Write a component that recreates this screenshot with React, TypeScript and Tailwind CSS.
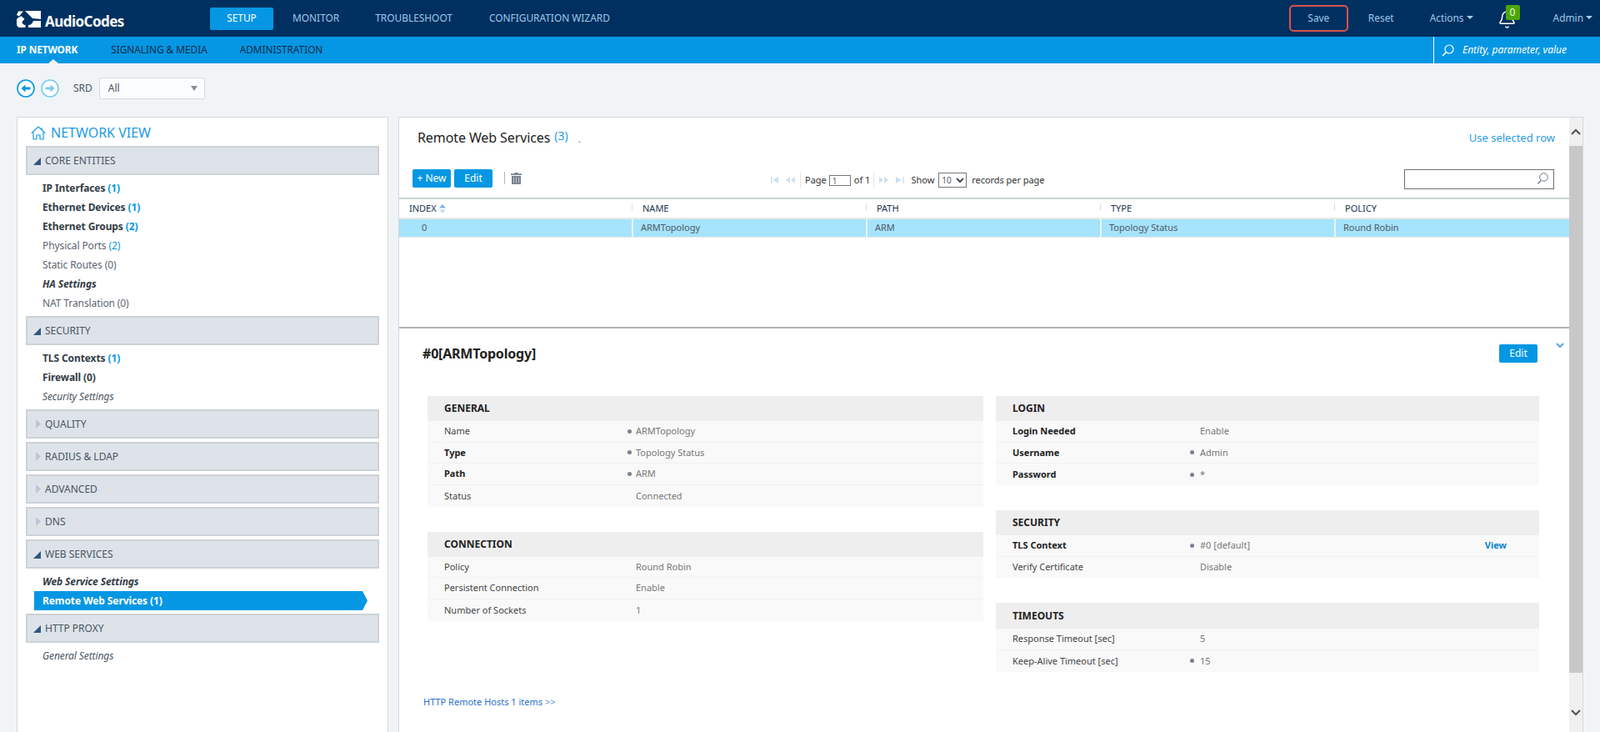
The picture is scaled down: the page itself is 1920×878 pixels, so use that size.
import React from "react";
import { Bell } from "lucide-react";

const Logo = () => (
  <div className="flex items-center w-[232px]">
    <svg width="29" height="20" viewBox="0 0 29 20" className="shrink-0 mt-[2px]">
      <path d="M2 0.5h6L3 6.5 0 5z" fill="#fff" />
      <path d="M10 0h19v10l-10-1z" fill="#fff" />
      <path d="M0 10c2-2 4-3.5 6-3.5l3.5 3.5-3 3c0 2.500 2 4 4 4v3H4C1.500 20 0 18 0 16z" fill="#fff" />
      <path d="M20 12h9v8H14v-3c3 0 5-2 6-5z" fill="#fff" />
    </svg>
    <span className="ml-[5px] mt-[6px] text-[17px] font-bold text-white leading-none tracking-[-0.55px] font-['Liberation_Serif',serif]">AudioCodes</span>
  </div>
);

const Caret = () => <span className="inline-block ml-[3px] mb-[2px] border-x-[4px] border-t-[4px] border-x-transparent border-t-[#a9cfee]" />;

const TopBar = () => (
  <div className="flex items-center h-11 bg-[#003060] pl-5 text-[11.9px] text-[#9ec8ea] shrink-0">
    <Logo />
    <div className="flex items-center h-[27px] w-[76px] justify-center bg-[#0597e3] text-white rounded-[2px]">SETUP</div>
    <span className="ml-[23px]">MONITOR</span>
    <span className="ml-[43px]">TROUBLESHOOT</span>
    <span className="ml-[44px]">CONFIGURATION WIZARD</span>
    <div className="ml-auto flex items-center mr-[9px]">
      <div className="flex items-center justify-center w-[71px] h-8 border-2 border-[#d9534f] rounded-[5px]">Save</div>
      <span className="ml-[24px]">Reset</span>
      <span className="ml-[43px] flex items-center">Actions<Caret /></span>
      <div className="relative ml-[29px] w-[23px] h-[24px] flex items-center justify-center">
        <Bell size={23} strokeWidth={1.5} className="text-white mt-[2px]" />
        <span className="absolute left-[10px] top-[-4px] w-[17px] h-[18px] bg-[#4ca60a] text-[#e8ffd8] rounded-[2px] flex items-center justify-center text-xs">0</span>
      </div>
      <span className="ml-[44px] flex items-center">Admin<Caret /></span>
    </div>
  </div>
);

const SubBar = () => (
  <div className="relative flex items-center h-8 bg-[#0597e3] pl-5 text-[11.8px] shrink-0">
    <span className="font-bold text-white tracking-[-0.1px]">IP NETWORK</span>
    <span className="ml-[40px] text-[#0e2a47]">SIGNALING &amp; MEDIA</span>
    <span className="ml-[39px] text-[#0e2a47]">ADMINISTRATION</span>
    <span className="absolute left-[58px] bottom-0 border-x-[6px] border-b-[5px] border-x-transparent border-b-[#f0f4f7]" />
    <div className="ml-auto flex items-center h-full w-[200px] border-l border-white pl-[9px]">
      <svg width="15" height="15" viewBox="0 0 15 15" fill="none" stroke="#fff" strokeWidth="1.2">
        <circle cx="9" cy="6" r="5" />
        <path d="M5.3 9.7L1 14" strokeWidth="1.5" />
      </svg>
      <span className="ml-[10px] italic text-white text-xs">Entity, parameter, value</span>
    </div>
  </div>
);

const NavCircle = ({ dir, active }: { dir: "l" | "r"; active: boolean }) => {
  const c = active ? "#0597e3" : "#7ccaf3";
  return (
    <svg width="22" height="22" viewBox="0 0 22 22">
      <circle cx="11" cy="11" r="10" fill="#fff" stroke={c} strokeWidth="1.6" />
      <path d={dir === "l" ? "M5.500 11l5-4.500v3h6v3h-6v3z" : "M16.500 11l-5-4.500v3h-6v3h6v3z"} fill={c} />
    </svg>
  );
};

const SrdRow = () => (
  <div className="flex items-center h-[64px] pl-5 pb-[4px] shrink-0 text-xs text-[#4a5560]">
    <NavCircle dir="l" active />
    <div className="ml-[7px]"><NavCircle dir="r" active={false} /></div>
    <span className="ml-[17px]">SRD</span>
    <div className="ml-[8px] flex items-center justify-between w-[127px] h-[26px] bg-[#fbfcfd] border border-[#d5d8db] rounded-[2px] pl-[10px] pr-[8px]">
      <span>All</span>
      <span className="border-x-[4.5px] border-t-[6px] border-x-transparent border-t-[#8a8f95]" />
    </div>
  </div>
);

const SectionHead = ({ label, open }: { label: string; open: boolean }) => (
  <div className="flex items-center h-[35px] bg-[#dde3e9] border-2 border-[#ccd2d6] text-xs text-[#4a5560] relative pl-[21px]">
    {open ? (
      <svg width="9" height="9" viewBox="0 0 9 9" className="absolute left-[7px] top-[12px]"><path d="M9 0v9H0z" fill="#33567f" /></svg>
    ) : (
      <svg width="6" height="11" viewBox="0 0 6 11" className="absolute left-[10px] top-[10px]"><path d="M0 0l6 5.500L0 11z" fill="#bdc6d6" /></svg>
    )}
    {label}
  </div>
);

type It = { t: string; n?: string; k?: "b" | "i" | "bi"; active?: boolean };

const Item = ({ t, n, k }: It) => {
  const base = k === "b" ? "font-bold text-[#333c46]" : k === "i" ? "italic text-[#4a5560]" : k === "bi" ? "italic font-bold text-[#333c46]" : "text-[#5b6570]";
  return (
    <div className={"h-[23px] flex items-center pl-[10px] text-xs tracking-[-0.1px] " + base}>
      <span className="whitespace-pre">{t}</span>
      {n && <span className={"ml-[3px] " + (n === "(0)" ? "" : "text-[#0597e3]")}>{n}</span>}
    </div>
  );
};

const Group = ({ label, items, children }: { label: string; items?: It[]; children?: React.ReactNode }) => (
  <div>
    <SectionHead label={label} open={!!items} />
    {items && <div className="py-1 pl-[10px]">{items.map((i) => <Item key={i.t} {...i} />)}{children}</div>}
    {!items && <div className="h-1" />}
  </div>
);

const LeftPanel = () => (
  <div className="w-[446px] shrink-0 bg-white border-x border-t border-[#d5d8db] px-[10px] overflow-hidden">
    <div className="flex items-center h-[34px] pl-[6px] pt-[2px] text-[#1c9be2]">
      <svg width="18" height="17" viewBox="0 0 18 17" fill="none" stroke="#1c9be2" strokeWidth="1.2">
        <path d="M0.800 8.800L9 1l8.200 7.800" />
        <path d="M3 7.500V16h4v-5h4v5h4V7.500" />
        <path d="M13 2v3" />
      </svg>
      <span className="ml-[6px] text-base">NETWORK VIEW</span>
    </div>
    <Group label="CORE ENTITIES" items={[
      { t: "IP Interfaces", n: "(1)", k: "b" },
      { t: "Ethernet Devices", n: "(1)", k: "b" },
      { t: "Ethernet Groups", n: "(2)", k: "b" },
      { t: "Physical Ports", n: "(2)" },
      { t: "Static Routes", n: "(0)" },
      { t: "HA Settings", k: "bi" },
      { t: "NAT Translation", n: "(0)" },
    ]} />
    <Group label="SECURITY" items={[
      { t: "TLS Contexts", n: "(1)", k: "b" },
      { t: "Firewall", n: "(0)", k: "b" },
      { t: "Security Settings", k: "i" },
    ]} />
    <Group label="QUALITY" />
    <Group label="RADIUS & LDAP" />
    <Group label="ADVANCED" />
    <Group label="DNS" />
    <Group label="WEB SERVICES" items={[{ t: "Web Service Settings", k: "bi" }]}>
      <div className="flex h-[23px] w-[400px]">
        <div className="flex items-center flex-1 bg-[#0597e3] pl-[10px] text-xs font-bold text-white tracking-[-0.1px]">Remote Web Services (1)</div>
        <svg width="6" height="23" viewBox="0 0 6 23" className="shrink-0"><path d="M0 0l6 11.500L0 23z" fill="#0597e3" /></svg>
      </div>
    </Group>
    <Group label="HTTP PROXY" items={[{ t: "General Settings", k: "i" }]} />
  </div>
);

const PagerIcon = ({ d }: { d: string }) => (
  <svg width="11" height="8" viewBox="0 0 11 8"><path d={d} fill="#cfe0ec" /></svg>
);

const Toolbar = () => (
  <div className="flex items-start h-[34px] text-[11px] text-[#333]">
    <div className="ml-4 flex items-center justify-center w-[46px] h-[22px] bg-[#0597e3] text-white text-xs rounded-[2px]">+ New</div>
    <div className="ml-1 flex items-center justify-center w-[46px] h-[22px] bg-[#0597e3] text-white text-xs rounded-[2px]">Edit</div>
    <span className="ml-[14px] mt-[3px] w-px h-[15px] bg-[#b5b5b5]" />
    <svg width="13" height="14" viewBox="0 0 13 14" className="ml-[7px] mt-[4px]">
      <path d="M4.500 0h4v1.300h4.500v1.700H0V1.300h4.500z M1 4h11v10H1z" fill="#7a8290" />
      <path d="M3.500 5.500v7M6.500 5.500v7M9.500 5.500v7" stroke="#c9cdd4" strokeWidth="0.9" />
    </svg>
    <div className="ml-[298px] flex items-center mt-[4px] h-[18px]">
      <PagerIcon d="M1 0h1.500v8H1z M10 0v8L3 4z" />
      <span className="ml-2" />
      <PagerIcon d="M5 0v8L0 4z M11 0v8L6 4z" />
      <span className="ml-[6px] w-px h-[18px] bg-[#e3e3e3]" />
      <span className="ml-[5px]">Page</span>
      <span className="ml-[3px] w-[26px] h-[13px] border border-[#777] text-[10px] leading-[12px] pl-[3px] text-[#666]">1</span>
      <span className="ml-[4px]">of 1</span>
      <span className="ml-[4px] w-px h-[18px] bg-[#e3e3e3]" />
      <span className="ml-[6px]" />
      <PagerIcon d="M0 0v8L5 4z M6 0v8L11 4z" />
      <span className="ml-[9px]" />
      <PagerIcon d="M0 0v8L7 4z M8.500 0H10v8H8.500z" />
      <span className="ml-[7px]">Show</span>
      <span className="ml-[5px] flex items-center w-[34px] h-[18px] border border-[#777] pl-[3px] text-[10px] text-[#555]">
        10
        <svg width="10" height="7" viewBox="0 0 10 7" className="ml-[5px]"><path d="M1 1l4 4 4-4" fill="none" stroke="#222" strokeWidth="1.7" /></svg>
      </span>
      <span className="ml-[6px] tracking-[-0.05px]">records per page</span>
    </div>
    <div className="ml-auto mr-[18px] relative w-[180px] h-6 border border-[#6f6f6f]">
      <svg width="14" height="15" viewBox="0 0 14 15" fill="none" stroke="#6c7680" strokeWidth="1" className="absolute right-[6px] top-[3px]">
        <circle cx="8.500" cy="5.500" r="4.800" />
        <path d="M5 9.500L1.500 13.500" strokeWidth="1.3" />
      </svg>
    </div>
  </div>
);

const cols = "grid grid-cols-[279px_281px_281px_281px_1fr]";
const heads = ["INDEX", "NAME", "PATH", "TYPE", "POLICY"];
const vals = ["0", "ARMTopology", "ARM", "Topology Status", "Round Robin"];

const Table = () => (
  <div className="border-t-2 border-[#ccd2d6]">
    <div className={cols + " h-[22px] text-[11px] text-[#1b3350]"}>
      {heads.map((h, i) => (
        <div key={h} className={"flex items-center relative " + (i === 0 ? "pl-[12px]" : "pl-[13px]")}>
          {i > 0 && <span className="absolute left-0 top-[5px] h-[9px] w-px bg-[#ddd]" />}
          {h}
          {i === 0 && (
            <svg width="8" height="11" viewBox="0 0 8 11" className="ml-[3px]">
              <path d="M4 0l4 4.500H0z" fill="#7fb2dc" />
              <path d="M4 11L0 6.500h8z" fill="#c6dcee" />
            </svg>
          )}
        </div>
      ))}
    </div>
    <div className={cols + " h-[24px] border-t-2 border-b border-t-[#e8e8e8] border-b-[#e8e8e8] bg-[#a6e3fd] text-[11px] text-[#4f5a64]"}>
      {vals.map((v, i) => (
        <div key={v} className={"flex items-center " + (i === 0 ? "pl-[27px]" : "pl-[9px] border-l-2 border-[#e8f6fc]")}>{v}</div>
      ))}
    </div>
  </div>
);

type Row = { l: string; v: string; b?: boolean; dot?: boolean; view?: boolean };

const Section = ({ title, rows, mt, labelW, gap, headH }: { title: string; rows: Row[]; mt?: string; labelW: string; gap: string; headH?: string }) => (
  <div className={mt}>
    <div className={"flex items-center bg-[#eeeeee] pl-[20px] text-xs font-bold text-[#222] " + (headH ?? "h-[30px]")}>{title}</div>
    {rows.map((r, i) => (
      <div key={r.l} className={"flex items-center h-[25.67px] bg-[#f9f9f9] pl-[20px] text-[11px] " + (i < rows.length - 1 ? "border-b border-[#f1f1f1]" : "")}>
        <span className={labelW + " " + (r.b ? "font-bold text-[#222]" : "text-[#444]")}>{r.l}</span>
        <span className="w-[5px] h-[5px] flex items-center justify-center">
          {r.dot && <span className="w-[5px] h-[5px] rounded-full bg-[#7a8290]" />}
        </span>
        <span className={gap + " text-[#777]"}>{r.v}</span>
        {r.view && <span className="ml-auto mr-[39px] font-bold text-[#0a84d0]">View</span>}
      </div>
    ))}
  </div>
);

const Details = () => (
  <div className="relative">
    <div className="flex items-center h-[62px] pl-[28px]">
      <span className="text-base font-bold text-[#222] tracking-[-0.2px] mt-[-2px]">#0[ARMTopology]</span>
      <div className="ml-auto mr-[38px] mt-[-2px] flex items-center justify-center w-[46px] h-[22px] bg-[#0597e3] text-white text-xs rounded-[2px]">Edit</div>
    </div>
    <svg width="10" height="7" viewBox="0 0 10 7" className="absolute right-[6px] top-[17px]"><path d="M1 1l4 4 4-4" fill="none" stroke="#5aa5dc" strokeWidth="2" /></svg>
    <div className="mt-[19px] flex pl-[34px] pr-[35px] gap-[15px]">
      <div className="w-[667px]">
        <Section labelW="w-[220px]" gap="ml-[5px]" title="GENERAL" rows={[
          { l: "Name", v: "ARMTopology", dot: true },
          { l: "Type", v: "Topology Status", b: true, dot: true },
          { l: "Path", v: "ARM", b: true, dot: true },
          { l: "Status", v: "Connected" },
        ]} />
        <Section labelW="w-[220px]" gap="ml-[5px]" mt="mt-[30px]" title="CONNECTION" rows={[
          { l: "Policy", v: "Round Robin" },
          { l: "Persistent Connection", v: "Enable" },
          { l: "Number of Sockets", v: "1" },
        ]} />
        <div className="mt-[89px] ml-[-5px] text-[11px] text-[#2a6fc9]">HTTP Remote Hosts 1 items <span className="text-[#6b93c9]">&gt;&gt;</span></div>
      </div>
      <div className="w-[652px]">
        <Section labelW="w-[213px]" gap="ml-[7px]" title="LOGIN" rows={[
          { l: "Login Needed", v: "Enable", b: true },
          { l: "Username", v: "Admin", b: true, dot: true },
          { l: "Password", v: "*", b: true, dot: true },
        ]} />
        <Section labelW="w-[213px]" gap="ml-[7px]" mt="mt-[30px]" title="SECURITY" rows={[
          { l: "TLS Context", v: "#0 [default]", b: true, dot: true, view: true },
          { l: "Verify Certificate", v: "Disable" },
        ]} />
        <Section labelW="w-[213px]" gap="ml-[7px]" mt="mt-[30px]" headH="h-[31px]" title="TIMEOUTS" rows={[
          { l: "Response Timeout [sec]", v: "5" },
          { l: "Keep-Alive Timeout [sec]", v: "15", dot: true },
        ]} />
      </div>
    </div>
  </div>
);

const Scrollbar = () => (
  <div className="w-4 shrink-0 bg-[#f0f0f0] flex flex-col items-center">
    <div className="h-[34px] flex items-center justify-center">
      <svg width="12" height="8" viewBox="0 0 12 8"><path d="M1 7l5-5 5 5" fill="none" stroke="#555" strokeWidth="2.200" /></svg>
    </div>
    <div className="w-full h-[632px] bg-[#c8c8c8]" />
    <div className="mt-[44px]">
      <svg width="12" height="8" viewBox="0 0 12 8"><path d="M1 1l5 5 5-5" fill="none" stroke="#555" strokeWidth="2.200" /></svg>
    </div>
  </div>
);

const RightPanel = () => (
  <div className="w-[1422px] ml-[12px] shrink-0 flex bg-white border-x border-t border-[#d5d8db] overflow-hidden">
    <div className="flex-1 min-w-0">
      <div className="flex items-start h-[62px] pl-[22px] pr-[17px] pt-[12px]">
        <span className="text-base text-[#222] tracking-[-0.1px]">Remote Web Services</span>
        <span className="ml-[5px] text-sm text-[#2a9be0]">(3)</span>
        <span className="ml-[12px] mt-[6px] text-xs text-[#888]">.</span>
        <span className="ml-auto mt-[3px] text-[13px] text-[#2a9be0]">Use selected row</span>
      </div>
      <Toolbar />
      <Table />
      <div className="mt-[107px] h-[2px] bg-[#b4b4b4]" />
      <Details />
    </div>
    <Scrollbar />
  </div>
);

export default function App() {
  return (
    <div className="h-screen flex flex-col bg-[#f0f4f7] overflow-hidden font-['Open_Sans',sans-serif]">
      <TopBar />
      <SubBar />
      <SrdRow />
      <div className="flex-1 min-h-0 flex pl-5">
        <LeftPanel />
        <RightPanel />
      </div>
    </div>
  );
}
